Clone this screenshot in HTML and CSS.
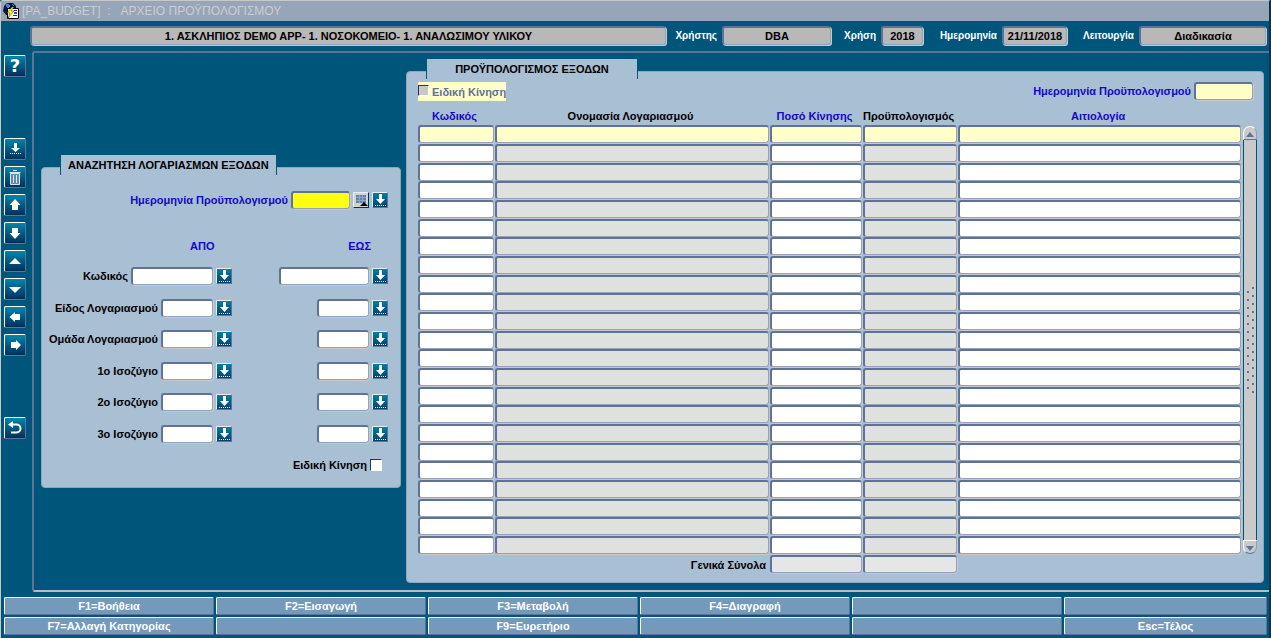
FILE: index.html
```html
<!DOCTYPE html>
<html lang="el">
<head>
    <meta charset="UTF-8">
    <meta name="viewport" content="width=device-width, initial-scale=1.0">
    <title>Αρχείο Προϋπολογισμού</title>
    <link rel="stylesheet" href="styles.css">
</head>
<body>
    <svg class="defs" width="0" height="0" aria-hidden="true">
        <defs>
            <symbol id="lov" viewBox="0 0 14 14">
                <path d="M6 1h3v5h3L7.500 11 3 6h3z" fill="#fff"/>
                <path d="M2 12.500h11" stroke="#fff" stroke-dasharray="1 1"/>
            </symbol>
        </defs>
    </svg>

    <div class="window">
        <header class="titlebar">
            <svg width="16" height="16" viewBox="0 0 16 16">
                <path d="M1 3l3-3h6l3 3v3H7v6H3L0 8z" fill="#101050"/>
                <path d="M3 2l2-1 2 2-2 2zM9 1l2 2" fill="#2f86c4" stroke="#4ca0a0"/>
                <path d="M4.500 5.500h11v10h-11z" fill="#fff" stroke="#000"/>
                <path d="M9 4L4 10h3l-2 5 6-7H8l3-4z" fill="#ff0" stroke="#333" stroke-width=".5"/>
                <path d="M11 7.500h3M10 12.500h4" stroke="#228"/>
                <path d="M11 9h3v2h-3z" fill="#44a"/>
            </svg>
            <h1>[PA_BUDGET] &nbsp;: &nbsp; ΑΡΧΕΙΟ ΠΡΟΫΠΟΛΟΓΙΣΜΟΥ</h1>
        </header>

        <div class="info">
            <input class="field company" type="text" value="1. ΑΣΚΛΗΠΙΟΣ DEMO APP- 1. ΝΟΣΟΚΟΜΕΙΟ- 1. ΑΝΑΛΩΣΙΜΟΥ ΥΛΙΚΟΥ" aria-label="Εταιρεία" readonly>
            <label for="user">Χρήστης</label>
            <input class="field user" id="user" type="text" value="DBA" readonly>
            <label for="year">Χρήση</label>
            <input class="field year" id="year" type="text" value="2018" readonly>
            <label for="today">Ημερομηνία</label>
            <input class="field today" id="today" type="text" value="21/11/2018" readonly>
            <label for="mode">Λειτουργία</label>
            <input class="field mode" id="mode" type="text" value="Διαδικασία" readonly>
        </div>

        <div class="content">
            <nav class="toolbar">
                <button class="tool help" aria-label="Βοήθεια">?</button>
                <button class="tool" aria-label="Λίστα τιμών"><svg viewBox="0 0 20 20"><path d="M9 4h3v5h3L10.500 13 6 9h3z"/><path d="M5 14.500h11" stroke="#fff" stroke-dasharray="1 1"/></svg></button>
                <button class="tool" aria-label="Διαγραφή"><svg viewBox="0 0 20 20"><path d="M5.500 6.500h9v11h-9z" fill="#6089b0" stroke="#dce8f4"/><path d="M4.500 5.500h11M8 3.500h4M8.500 8v8M11.500 8v8" stroke="#dce8f4"/></svg></button>
                <button class="tool" aria-label="Προηγούμενη εγγραφή"><svg viewBox="0 0 20 20"><path d="M10 4l5.500 6H13v5H7v-5H4.500z"/></svg></button>
                <button class="tool" aria-label="Επόμενη εγγραφή"><svg viewBox="0 0 20 20"><path d="M10 16l-5.500-6H7V5h6v5h2.500z"/></svg></button>
                <button class="tool" aria-label="Προηγούμενη σελίδα"><svg viewBox="0 0 20 20"><path d="M4 13l6-6 6 6z"/></svg></button>
                <button class="tool" aria-label="Επόμενη σελίδα"><svg viewBox="0 0 20 20"><path d="M4 8h12l-6 6z"/></svg></button>
                <button class="tool" aria-label="Προηγούμενο μπλοκ"><svg viewBox="0 0 20 20"><path d="M4.500 10L10 5v2h5v6h-5v2z"/></svg></button>
                <button class="tool" aria-label="Επόμενο μπλοκ"><svg viewBox="0 0 20 20"><path d="M16 10l-5-5v2H6v6h5v2z"/></svg></button>
                <button class="tool exit" aria-label="Έξοδος"><svg viewBox="0 0 20 20"><path d="M6 6.500h5.500a4 4 0 0 1 0 8H6" fill="none" stroke="#fff" stroke-width="2"/><path d="M3 6.500L8 3v7z"/></svg></button>
            </nav>

            <main>
                <form class="panel search">
                    <h2>ΑΝΑΖΗΤΗΣΗ ΛΟΓΑΡΙΑΣΜΩΝ ΕΞΟΔΩΝ</h2>
                    <div class="line date-line">
                        <label class="blue" for="searchDate">Ημερομηνία Προϋπολογισμού</label>
                        <input class="field date required" id="searchDate" type="text">
                        <button class="lov cal" type="button" aria-label="Ημερολόγιο"><svg viewBox="0 0 14 14"><path d="M0 0h14v14H0z" fill="#d2d2d2"/><path d="M2 2h10v8H2z" fill="#6680a8"/><path d="M2 4.500h10M2 7.500h10M5.500 2v8M8.500 2v8" stroke="#8ea5c4"/><path d="M6 13l4-4 4 4z" fill="#000"/></svg></button>
                        <button class="lov" type="button" aria-label="Λίστα"><svg><use href="#lov"/></svg></button>
                    </div>
                    <div class="range-head blue"><span>ΑΠΟ</span><span>ΕΩΣ</span></div>
                    <div id="ranges"></div>
                    <div class="line special-line">
                        <label for="searchSpecial">Ειδική Κίνηση</label>
                        <input class="check" id="searchSpecial" type="checkbox">
                    </div>
                </form>

                <section class="panel budget">
                    <h2>ΠΡΟΫΠΟΛΟΓΙΣΜΟΣ ΕΞΟΔΩΝ</h2>
                    <div class="budget-top">
                        <label class="special"><input class="check" type="checkbox" disabled>Ειδική Κίνηση</label>
                        <div class="line">
                            <label class="blue" for="budgetDate">Ημερομηνία Προϋπολογισμού</label>
                            <input class="field date current" id="budgetDate" type="text">
                        </div>
                    </div>
                    <div class="grid">
                        <table>
                            <colgroup>
                                <col class="c-code"><col class="c-name"><col class="c-sum"><col class="c-sum"><col>
                            </colgroup>
                            <thead>
                                <tr>
                                    <th class="blue">Κωδικός</th>
                                    <th>Ονομασία Λογαριασμού</th>
                                    <th class="blue">Ποσό Κίνησης</th>
                                    <th>Προϋπολογισμός</th>
                                    <th class="blue">Αιτιολογία</th>
                                </tr>
                            </thead>
                            <tbody id="rows"></tbody>
                            <tfoot>
                                <tr>
                                    <th colspan="2">Γενικά Σύνολα</th>
                                    <td><input class="field total" type="text" aria-label="Σύνολο κίνησης" readonly></td>
                                    <td><input class="field total" type="text" aria-label="Σύνολο προϋπολογισμού" readonly></td>
                                    <td></td>
                                </tr>
                            </tfoot>
                        </table>
                        <div class="scroll">
                            <button aria-label="Πάνω"><svg width="8" height="5"><path d="M0 5l4-5 4 5z"/></svg></button>
                            <div class="thumb"><div class="grip"></div></div>
                            <button aria-label="Κάτω"><svg width="8" height="5"><path d="M0 0l4 5 4-5z"/></svg></button>
                        </div>
                    </div>
                </section>
            </main>
        </div>

        <footer class="keys">
            <button>F1=Βοήθεια</button>
            <button>F2=Εισαγωγή</button>
            <button>F3=Μεταβολή</button>
            <button>F4=Διαγραφή</button>
            <button></button>
            <button></button>
            <button>F7=Αλλαγή Κατηγορίας</button>
            <button></button>
            <button>F9=Ευρετήριο</button>
            <button></button>
            <button></button>
            <button>Esc=Τέλος</button>
        </footer>
    </div>

    <script>
        const ranges = ['Κωδικός', 'Είδος Λογαριασμού', 'Ομάδα Λογαριασμού', '1ο Ισοζύγιο', '2ο Ισοζύγιο', '3ο Ισοζύγιο'];
        const lov = '<button class="lov" type="button" aria-label="Λίστα"><svg><use href="#lov"/></svg></button>';

        document.getElementById('ranges').innerHTML = ranges.map((name, i) => `
            <div class="range">
                <div class="line"><label for="from${i}">${name}</label><input class="field from" id="from${i}" type="text">${lov}</div>
                <div class="line"><input class="field to" type="text" aria-label="${name} έως">${lov}</div>
            </div>`).join('');

        const columns = ['Κωδικός', 'Ονομασία', 'Ποσό', 'Προϋπολογισμός', 'Αιτιολογία'];
        let rows = '';
        for (let i = 0; i < 23; i++) {
            rows += '<tr>' + columns.map((name, c) =>
                `<td><input class="field" type="text" aria-label="${name}"${c == 1 || c == 3 ? ' readonly' : ''}></td>`
            ).join('') + '</tr>';
        }
        document.getElementById('rows').innerHTML = rows;
    </script>
</body>
</html>
```
FILE: styles.css
```css
* {
    box-sizing: border-box;
}
body {
    margin: 0;
    background-color: #00557a;
    font-family: "Liberation Sans", Arial, sans-serif;
    font-size: 11px;
    font-weight: bold;
    color: #000;
}
button, input {
    font: inherit;
    margin: 0;
    padding: 0;
}
.defs {
    position: absolute;
}
.window {
    min-height: 100vh;
    display: flex;
    flex-direction: column;
    border: 1px solid #c8c8c8;
    border-right: 2px solid #003450;
    border-bottom: none;
    border-radius: 3px 3px 0 0;
}
.titlebar {
    height: 20px;
    display: flex;
    align-items: center;
    gap: 3px;
    padding-left: 2px;
    background-color: #96a5b8;
}
.titlebar h1 {
    margin: 0;
    font-size: 12px;
    font-weight: normal;
    color: #cccdd2;
}
.blue {
    color: #1208c8;
}

/* text boxes */
.field {
    display: block;
    height: 18px;
    border: 2px solid #5e7397;
    border-right: 1px solid #93a3b9;
    border-bottom: 1px solid #93a3b9;
    border-radius: 3px;
    box-shadow: 1px 1px 0 #c8c8c8;
    background-color: #fff;
    outline: none;
}
.field.required {
    background-color: #ffff10;
}
.field.date {
    width: 59px;
}

/* info line */
.info {
    display: flex;
    align-items: center;
    padding: 5px 3px 6px 29px;
}
.info label {
    text-align: right;
    padding-right: 5px;
    font-size: 10px;
    color: #fff;
    width: 56px;
}
.info label[for="year"] {
    width: 50px;
}
.info label[for="today"] {
    width: 79px;
}
.info label[for="mode"] {
    width: 72px;
}
.info .field {
    height: 19px;
    text-align: center;
    background-color: #b8b8b8;
}
.company {
    flex: 1;
    min-width: 0;
}
.user {
    width: 109px;
}
.year {
    width: 42px;
}
.today {
    width: 65px;
}
.mode {
    width: 127px;
}

/* toolbar */
.content {
    flex: 1;
    display: flex;
}
.toolbar {
    width: 31px;
    padding: 4px 0 0 3px;
    display: flex;
    flex-direction: column;
    gap: 6px;
}
.tool {
    width: 22px;
    height: 22px;
    border: 1px solid #fff;
    border-right-color: #5e7397;
    border-bottom-color: #5e7397;
    border-radius: 2px;
    background: linear-gradient(#0086ab, #00305c);
    color: #fff;
}
.tool svg {
    display: block;
    width: 20px;
    height: 20px;
    fill: #fff;
}
.help {
    font-family: "DejaVu Sans", sans-serif;
    font-size: 18px;
    line-height: 20px;
    margin-bottom: 55px;
}
.exit {
    margin-top: 55px;
}
main {
    flex: 1;
    min-width: 0;
    display: flex;
    align-items: flex-start;
    gap: 5px;
    padding: 18px 5px 7px 7px;
    border: 2px solid #5e7397;
    border-right: none;
    border-bottom-color: #b4bcc4;
    border-radius: 3px 0 0 3px;
}

/* panels */
.panel {
    border: 1px solid #8fa5bd;
    border-radius: 4px;
    background-color: #a9bfd4;
}
.panel h2 {
    width: max-content;
    height: 20px;
    margin: -13px 0 0 18px;
    padding: 0 7px;
    border: 1px solid #00557a;
    border-width: 0 1px;
    background-color: #a9bfd4;
    font-size: 11px;
    line-height: 20px;
    text-align: center;
}
.line {
    display: flex;
    align-items: center;
    justify-content: flex-end;
    gap: 3px;
}
.lov {
    width: 16px;
    height: 16px;
    border: 1px solid #e8eef4;
    border-right-color: #5e7397;
    border-bottom-color: #5e7397;
    background: linear-gradient(#0080a4, #00426c);
}
.lov svg {
    display: block;
    width: 14px;
    height: 14px;
}
.cal {
    border-right-color: #00305c;
    border-bottom-color: #00305c;
}
.check {
    appearance: none;
    width: 12px;
    height: 12px;
    border: 1px solid #27384e;
    border-right-color: #fff;
    border-bottom-color: #fff;
    background-color: #fff;
}
.search {
    width: 360px;
    margin-top: 96px;
    padding: 0 12px 16px 0;
}
.date-line {
    margin-top: 16px;
}
.range-head {
    display: flex;
    justify-content: space-between;
    padding: 0 17px 0 148px;
    margin: 31px 0 14px;
    line-height: 13px;
}
.range {
    display: flex;
    justify-content: space-between;
    margin-bottom: 13px;
}
.range:nth-child(odd) {
    margin-bottom: 14px;
}
.range .line:first-child {
    width: 190px;
}
.range .field {
    width: 52px;
}
.range:first-child .from {
    width: 82px;
}
.range:first-child .to {
    width: 90px;
}
.special-line {
    margin: 16px 6px 0 0;
}

/* budget grid */
.budget {
    flex: 1;
    min-width: 0;
    padding: 0 6px 8px 11px;
}
.budget h2 {
    width: 212px;
    margin-left: 8px;
}
.budget-top {
    display: flex;
    justify-content: space-between;
    align-items: flex-start;
    margin-top: 3px;
    padding-right: 4px;
}
.special {
    display: flex;
    align-items: flex-start;
    height: 19px;
    gap: 3px;
    padding-top: 3px;
    background-color: #ffffc8;
    line-height: 14px;
    color: #5e7397;
}
.special .check {
    width: 11px;
    height: 11px;
    background-color: #c8c8c8;
}
.grid {
    display: flex;
    gap: 1px;
    margin-top: 5px;
}
table {
    flex: 1;
    table-layout: fixed;
    border-collapse: collapse;
}
.c-code {
    width: 77px;
}
.c-name {
    width: 275px;
}
.c-sum {
    width: 93px;
}
th {
    height: 19px;
    padding: 0 4px 0 0;
    white-space: nowrap;
}
td {
    padding: 0 1px 1px 0;
}
td .field {
    width: 100%;
}
tbody tr:nth-child(3n) td {
    padding-bottom: 0;
}
td .field:read-only {
    background-color: #dfe1de;
}
tbody tr:first-child .field,
.field.current {
    background-color: #ffffc8;
}
tfoot th {
    text-align: right;
}
td .field.total {
    background-color: #e6e6e6;
}
.scroll {
    width: 14px;
    margin: 20px 0;
    display: flex;
    flex-direction: column;
}
.scroll button {
    height: 14px;
    border: 1px solid #fff;
    border-right-color: #8fa0b4;
    border-bottom-color: #5e7397;
    border-radius: 7px 7px 0 0;
    background-color: #cacaca;
    line-height: 8px;
}
.scroll button:last-child {
    border-radius: 0 0 7px 7px;
}
.scroll svg {
    fill: #5e7397;
}
.thumb {
    flex: 1;
    display: flex;
    align-items: center;
    justify-content: center;
    border: 1px solid #00557a;
    border-width: 0 1px;
    background-color: #cacaca;
}
.grip {
    width: 8px;
    height: 108px;
    background-image:
        radial-gradient(circle at 2px 6px, #5e7397 1px, transparent 1px),
        radial-gradient(circle at 7px 2px, #5e7397 1px, transparent 1px);
    background-size: 8px 8px;
}

/* function keys */
.keys {
    display: grid;
    grid-template-columns: repeat(5, 210fr) 203fr;
    gap: 2px;
    padding: 5px 2px 3px 3px;
}
.keys button {
    height: 18px;
    border: 1px solid #fff;
    border-right-color: #5e7397;
    border-bottom-color: #5e7397;
    border-radius: 2px;
    background-color: #7499ba;
    color: #fff;
}
```
